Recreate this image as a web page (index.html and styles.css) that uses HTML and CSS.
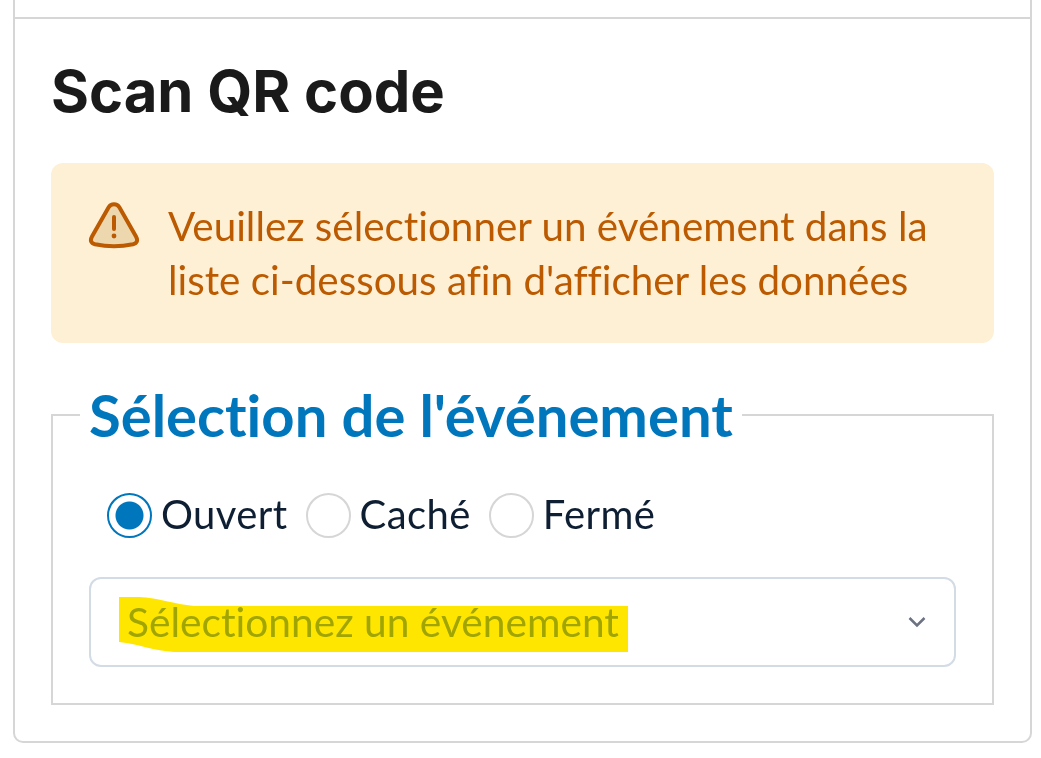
FILE: index.html
```html
<!DOCTYPE html>
<html lang="fr">
<head>
    <meta charset="UTF-8">
    <meta name="viewport" content="width=device-width, initial-scale=1.0">
    <title>Scan QR code</title>
    <link rel="stylesheet" href="styles.css">
</head>
<body>
    <div class="card">
        <div class="card-top"></div>
        <div class="card-body">
            <h1>Scan QR code</h1>
            <div class="alert">
                <svg class="alert-icon" viewBox="0 0 52 48" width="52" height="48">
                    <path class="alert-shape" d="M20.5 6.5c2.6-4.2 8.4-4.2 11 0l16.500 29c2.200 4 1 6.800-3 7.800-11.500 2.400-26.500 2.400-38 0-4-1-5.200-3.800-3-7.800z"/>
                    <path class="alert-mark" d="M26 16v12"/>
                    <circle class="alert-dot" cx="26" cy="35" r="2.400"/>
                </svg>
                <p>Veuillez sélectionner un événement dans la liste ci-dessous afin d'afficher les données</p>
            </div>
            <fieldset class="event-box">
                <legend>Sélection de l'événement</legend>
                <div class="radio-row">
                    <label class="radio"><input type="radio" name="status" checked><span>Ouvert</span></label>
                    <label class="radio"><input type="radio" name="status"><span>Caché</span></label>
                    <label class="radio"><input type="radio" name="status"><span>Fermé</span></label>
                </div>
                <div class="select">
                    <span class="placeholder">Sélectionnez un événement</span>
                    <svg class="chevron" viewBox="0 0 18 12" width="18" height="12">
                        <path d="M1.500 2l7.500 7.500L16.500 2"/>
                    </svg>
                    <svg class="highlight" viewBox="0 0 510 56" width="510" height="56">
                        <path d="M0 0H20C40 1 55 7 75 9H509V55H55C35 54 20 47 0 45z"/>
                    </svg>
                </div>
            </fieldset>
        </div>
    </div>
</body>
</html>
```

FILE: styles.css
```css
html, body {
    height: 100%;
}

body {
    margin: 0;
    padding: 0 9px 0 13px;
    background-color: #ffffff;
    font-family: 'Lato', 'Open Sans', sans-serif;
    font-variant-ligatures: none;
    overflow: hidden;
}

.card {
    border: 2px solid #d6d6d6;
    border-top: none;
    border-radius: 0 0 10px 10px;
    height: 743px;
    box-sizing: border-box;
}

.card-top {
    height: 17px;
    border-bottom: 2px solid #d6d6d6;
}

.card-body {
    padding: 36px 36px 0 36px;
}

h1 {
    margin: 0;
    font-family: 'Inter', sans-serif;
    font-size: 58px;
    line-height: 72px;
    font-weight: 700;
    color: #1a1a1a;
}

.alert {
    display: flex;
    gap: 28px;
    margin-top: 36px;
    padding: 36px 40px 34px 37px;
    height: 180px;
    box-sizing: border-box;
    background-color: #fef0d5;
    border-radius: 12px;
}

.alert-icon {
    flex: none;
    margin-top: 2px;
}

.alert-shape {
    fill: #ecd7ae;
    stroke: #bb5a00;
    stroke-width: 4;
}

.alert-mark {
    fill: none;
    stroke: #bb5a00;
    stroke-width: 4;
    stroke-linecap: round;
}

.alert-dot {
    fill: #bb5a00;
}

.alert p {
    margin: 0;
    font-size: 40.400px;
    line-height: 54px;
    color: #bb5a00;
}

.event-box {
    margin: 41px 0 0 0;
    padding: 47px 36px 36px 36px;
    border: 2px solid #d6d6d6;
    min-width: 0;
}

.event-box legend {
    margin-left: -9px;
    padding: 0 9px;
    font-size: 58px;
    line-height: 62px;
    font-weight: 700;
    color: #0077bd;
}

.radio-row {
    display: flex;
    gap: 18px;
    padding-left: 18px;
}

.radio {
    display: flex;
    align-items: center;
    gap: 9px;
    font-size: 40px;
    line-height: 38px;
    letter-spacing: 0.4px;
    color: #0f1f33;
}

.radio span {
    margin-bottom: 3px;
}

.radio input {
    appearance: none;
    width: 45px;
    height: 45px;
    margin: 0;
    border: 2px solid #d6d6d6;
    border-radius: 50%;
    background-color: #ffffff;
}

.radio input:checked {
    border-color: #0077bd;
    background: radial-gradient(circle, #0077bd 0 13.500px, #ffffff 14.500px);
}

.select {
    position: relative;
    display: flex;
    align-items: center;
    justify-content: space-between;
    height: 90px;
    margin-top: 39px;
    padding: 0 28px 2px 36px;
    box-sizing: border-box;
    border: 2px solid #d3dbe5;
    border-radius: 12px;
}

.placeholder {
    font-size: 40.700px;
    color: #a0b7b0;
}

.chevron {
    margin-top: 2px;
}

.chevron path {
    fill: none;
    stroke: #6b7280;
    stroke-width: 2.500;
}

.highlight {
    position: absolute;
    left: 28px;
    top: 18px;
    mix-blend-mode: multiply;
}

.highlight path {
    fill: #ffe600;
}
```
